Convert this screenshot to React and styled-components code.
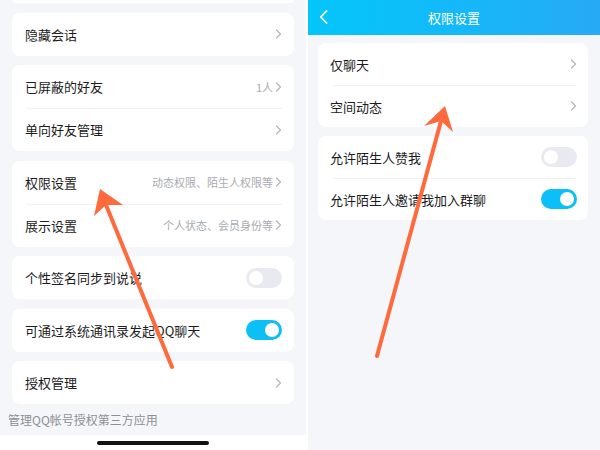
import styled, { createGlobalStyle } from "styled-components";

const GlobalStyle = createGlobalStyle`
  html, body {
    margin: 0;
    padding: 0;
    background: #ffffff;
  }
  body {
    font-family: "Noto Sans CJK SC", "Noto Sans", sans-serif;
    -webkit-font-smoothing: antialiased;
  }
`;

const Screen = styled.div`
  position: relative;
  width: 600px;
  height: 450px;
  display: flex;
  flex-direction: row;
  overflow: hidden;
  background: #ffffff;
`;

const LeftPane = styled.div`
  width: 306px;
  height: 450px;
  display: flex;
  flex-direction: column;
  flex-shrink: 0;
`;

const LeftContent = styled.div`
  height: 435px;
  background: #f5f6f9;
  display: flex;
  flex-direction: column;
  gap: 9.5px;
  padding: 0 12px;
  box-sizing: border-box;
`;

const HomeBar = styled.div`
  flex: 1;
  display: flex;
  align-items: center;
  justify-content: center;
  background: #ffffff;
  &::after {
    content: "";
    width: 112px;
    height: 4px;
    border-radius: 2px;
    background: #111111;
    margin-top: 1px;
  }
`;

const Split = styled.div`
  width: 2px;
  flex-shrink: 0;
  background: #ffffff;
`;

const RightPane = styled.div`
  flex: 1;
  height: 450px;
  background: #f5f6f9;
  display: flex;
  flex-direction: column;
`;

const Header = styled.div`
  height: 35px;
  flex-shrink: 0;
  position: relative;
  display: flex;
  align-items: center;
  justify-content: center;
  background: linear-gradient(90deg, #03c6fa 0%, #16b7f8 55%, #27aaf6 100%);
  color: #ffffff;
  font-size: 13px;
`;

const BackButton = styled.div`
  position: absolute;
  left: 9px;
  top: 9px;
  width: 12px;
  height: 16px;
  display: flex;
  align-items: center;
  justify-content: center;
`;

const RightContent = styled.div`
  display: flex;
  flex-direction: column;
  gap: 9px;
  padding: 8px 12px 0 10px;
`;

const Card = styled.div`
  background: #ffffff;
  border-radius: 8px;
  overflow: hidden;
  display: flex;
  flex-direction: column;
`;

const CutCard = styled.div`
  height: 3px;
  background: #ffffff;
  border-radius: 0 0 8px 8px;
  flex-shrink: 0;
`;

const Row = styled.div`
  position: relative;
  height: ${(p) => p.$h || 43}px;
  display: flex;
  align-items: center;
  justify-content: space-between;
  padding: 0 12px 0 13px;
  box-sizing: border-box;
  & + &::before {
    content: "";
    position: absolute;
    top: 0;
    left: 15px;
    right: 12px;
    height: 1px;
    background: #f0f1f4;
  }
`;

const Label = styled.span`
  font-size: 13px;
  color: #1c1c1e;
  white-space: nowrap;
`;

const Trail = styled.div`
  display: flex;
  align-items: center;
  gap: 2px;
  color: #a9abb1;
  font-size: 11px;
  white-space: nowrap;
`;

const Track = styled.div`
  width: 36px;
  height: 20px;
  border-radius: 10px;
  background: ${(p) => (p.$on ? "#0cbff7" : "#e9eaf1")};
  position: relative;
  flex-shrink: 0;
  &::after {
    content: "";
    position: absolute;
    top: 3px;
    left: ${(p) => (p.$on ? "19px" : "3px")};
    width: 14px;
    height: 14px;
    border-radius: 50%;
    background: #ffffff;
  }
`;

const Note = styled.div`
  font-size: 12px;
  color: #8e9096;
  margin: -1.5px -4px 0;
  line-height: 16px;
`;

const Overlay = styled.svg`
  position: absolute;
  left: 0;
  top: 0;
  pointer-events: none;
`;

const Chevron = () => (
  <svg width="7" height="10" viewBox="0 0 7 10">
    <path d="M1.5 1 L5.5 5 L1.5 9" fill="none" stroke="#b3b5bb" strokeWidth="1.2" strokeLinecap="round" strokeLinejoin="round" />
  </svg>
);

const Item = ({ label, hint, toggle, on }) => (
  <Row>
    <Label>{label}</Label>
    {toggle ? (
      <Track $on={on} />
    ) : (
      <Trail>
        {hint && <span>{hint}</span>}
        <Chevron />
      </Trail>
    )}
  </Row>
);

const RightItem = styled(Row)`
  padding: 0 11px 0 12px;
`;

const RItem = ({ label, toggle, on }) => (
  <RightItem $h={42}>
    <Label>{label}</Label>
    {toggle ? <Track $on={on} /> : <Chevron />}
  </RightItem>
);

const Arrow = ({ tail, tip, notch, left, right }) => (
  <g>
    <line x1={tail[0]} y1={tail[1]} x2={notch[0]} y2={notch[1]} stroke="#ff6a3c" strokeWidth="4" strokeLinecap="round" />
    <polygon
      points={`${tip.join(",")} ${left.join(",")} ${notch.join(",")} ${right.join(",")}`}
      fill="#ff6a3c"
    />
  </g>
);

export default function App() {
  return (
    <>
      <GlobalStyle />
      <Screen>
        <LeftPane>
          <LeftContent>
            <CutCard />
            <Card>
              <Item label="隐藏会话" />
            </Card>
            <Card>
              <Item label="已屏蔽的好友" hint="1人" />
              <Item label="单向好友管理" />
            </Card>
            <Card>
              <Item label="权限设置" hint="动态权限、陌生人权限等" />
              <Item label="展示设置" hint="个人状态、会员身份等" />
            </Card>
            <Card>
              <Item label="个性签名同步到说说" toggle />
            </Card>
            <Card>
              <Item label="可通过系统通讯录发起QQ聊天" toggle on />
            </Card>
            <Card>
              <Item label="授权管理" />
            </Card>
            <Note>管理QQ帐号授权第三方应用</Note>
          </LeftContent>
          <HomeBar />
        </LeftPane>
        <Split />
        <RightPane>
          <Header>
            <BackButton>
              <svg width="9" height="14" viewBox="0 0 9 14">
                <path d="M7.5 1 L1.8 7 L7.5 13" fill="none" stroke="#ffffff" strokeWidth="1.8" strokeLinecap="round" strokeLinejoin="round" />
              </svg>
            </BackButton>
            权限设置
          </Header>
          <RightContent>
            <Card>
              <RItem label="仅聊天" />
              <RItem label="空间动态" />
            </Card>
            <Card>
              <RItem label="允许陌生人赞我" toggle />
              <RItem label="允许陌生人邀请我加入群聊" toggle on />
            </Card>
          </RightContent>
        </RightPane>
        <Overlay width="600" height="450" viewBox="0 0 600 450">
          <Arrow tail={[172, 367]} tip={[100, 189]} notch={[106, 205]} left={[94, 216]} right={[123, 205]} />
          <Arrow tail={[377, 356]} tip={[445, 106]} notch={[441, 121]} left={[424, 126]} right={[453, 132]} />
        </Overlay>
      </Screen>
    </>
  );
}
